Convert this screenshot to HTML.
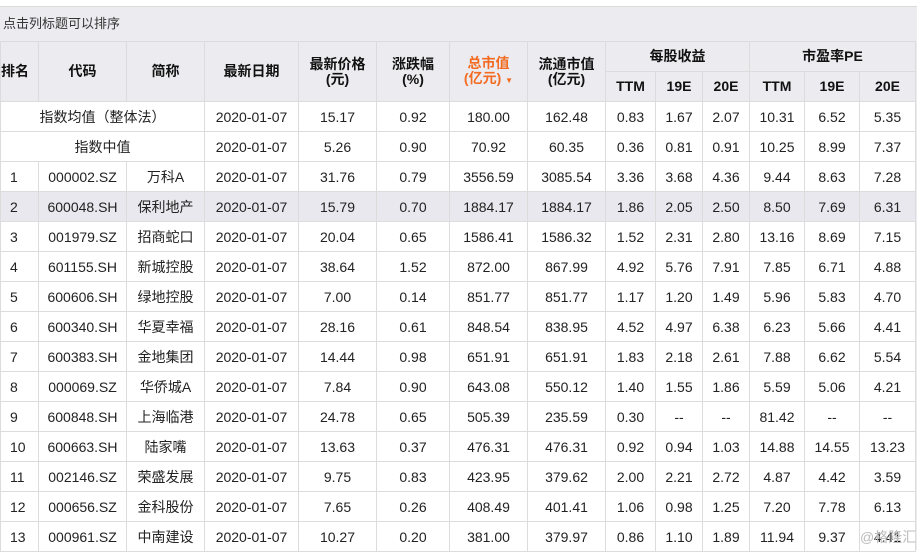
<!DOCTYPE html>
<html><head><meta charset="utf-8"><style>
body{margin:0;width:917px;height:550px;overflow:hidden;background:#fff;font-family:"Liberation Sans","Noto Sans CJK SC",sans-serif;}
.top{position:absolute;left:0;top:6px;width:917px;height:35px;background:#ecebf0;border-top:1px solid #dcdcdc;box-sizing:border-box;font-size:13px;color:#333;line-height:33px;padding-left:3px}
.right{position:absolute;left:915px;top:41px;width:2px;height:509px;background:#ecebf0}
table{position:absolute;left:0;top:41px;border-collapse:collapse;table-layout:fixed;font-size:14px;color:#222}
td,th{border:1px solid #dcdcdc;text-align:center;padding:0;white-space:nowrap;overflow:hidden}
th{background:#ecebf0;font-weight:bold;color:#111;font-size:14px;line-height:15px}
tr.h1 th{height:29px}
tr.h2 th{height:29px}
td{height:29px}
td.r{text-align:left;padding-left:9px}
tr.hl td{background:#e8e8ee}
.or{color:#f26b21}
.wm{position:absolute;left:860px;top:527px;font-size:14px;color:#bbb;white-space:nowrap}
</style></head><body>
<div class="top">点击列标题可以排序</div>
<div class="right"></div>
<table>
<colgroup><col style="width:38px"><col style="width:88px"><col style="width:78px"><col style="width:94px"><col style="width:78px"><col style="width:73px"><col style="width:78px"><col style="width:78px"><col style="width:50px"><col style="width:47px"><col style="width:47px"><col style="width:55px"><col style="width:55px"><col style="width:56px"></colgroup>
<tr class="h1"><th rowspan="2" style="text-align:left">排名</th><th rowspan="2">代码</th><th rowspan="2">简称</th><th rowspan="2">最新日期</th><th rowspan="2">最新价格<br>(元)</th><th rowspan="2">涨跌幅<br>(%)</th><th rowspan="2" class="or">总市值<br>(亿元) <span style="font-size:8px">▼</span></th><th rowspan="2">流通市值<br>(亿元)</th><th colspan="3">每股收益</th><th colspan="3">市盈率PE</th></tr>
<tr class="h2"><th>TTM</th><th>19E</th><th>20E</th><th>TTM</th><th>19E</th><th>20E</th></tr>
<tr><td colspan="3">指数均值（整体法）</td><td>2020-01-07</td><td>15.17</td><td>0.92</td><td>180.00</td><td>162.48</td><td>0.83</td><td>1.67</td><td>2.07</td><td>10.31</td><td>6.52</td><td>5.35</td></tr>
<tr><td colspan="3">指数中值</td><td>2020-01-07</td><td>5.26</td><td>0.90</td><td>70.92</td><td>60.35</td><td>0.36</td><td>0.81</td><td>0.91</td><td>10.25</td><td>8.99</td><td>7.37</td></tr>
<tr><td class="r">1</td><td>000002.SZ</td><td>万科A</td><td>2020-01-07</td><td>31.76</td><td>0.79</td><td>3556.59</td><td>3085.54</td><td>3.36</td><td>3.68</td><td>4.36</td><td>9.44</td><td>8.63</td><td>7.28</td></tr>
<tr class="hl"><td class="r">2</td><td>600048.SH</td><td>保利地产</td><td>2020-01-07</td><td>15.79</td><td>0.70</td><td>1884.17</td><td>1884.17</td><td>1.86</td><td>2.05</td><td>2.50</td><td>8.50</td><td>7.69</td><td>6.31</td></tr>
<tr><td class="r">3</td><td>001979.SZ</td><td>招商蛇口</td><td>2020-01-07</td><td>20.04</td><td>0.65</td><td>1586.41</td><td>1586.32</td><td>1.52</td><td>2.31</td><td>2.80</td><td>13.16</td><td>8.69</td><td>7.15</td></tr>
<tr><td class="r">4</td><td>601155.SH</td><td>新城控股</td><td>2020-01-07</td><td>38.64</td><td>1.52</td><td>872.00</td><td>867.99</td><td>4.92</td><td>5.76</td><td>7.91</td><td>7.85</td><td>6.71</td><td>4.88</td></tr>
<tr><td class="r">5</td><td>600606.SH</td><td>绿地控股</td><td>2020-01-07</td><td>7.00</td><td>0.14</td><td>851.77</td><td>851.77</td><td>1.17</td><td>1.20</td><td>1.49</td><td>5.96</td><td>5.83</td><td>4.70</td></tr>
<tr><td class="r">6</td><td>600340.SH</td><td>华夏幸福</td><td>2020-01-07</td><td>28.16</td><td>0.61</td><td>848.54</td><td>838.95</td><td>4.52</td><td>4.97</td><td>6.38</td><td>6.23</td><td>5.66</td><td>4.41</td></tr>
<tr><td class="r">7</td><td>600383.SH</td><td>金地集团</td><td>2020-01-07</td><td>14.44</td><td>0.98</td><td>651.91</td><td>651.91</td><td>1.83</td><td>2.18</td><td>2.61</td><td>7.88</td><td>6.62</td><td>5.54</td></tr>
<tr><td class="r">8</td><td>000069.SZ</td><td>华侨城A</td><td>2020-01-07</td><td>7.84</td><td>0.90</td><td>643.08</td><td>550.12</td><td>1.40</td><td>1.55</td><td>1.86</td><td>5.59</td><td>5.06</td><td>4.21</td></tr>
<tr><td class="r">9</td><td>600848.SH</td><td>上海临港</td><td>2020-01-07</td><td>24.78</td><td>0.65</td><td>505.39</td><td>235.59</td><td>0.30</td><td>--</td><td>--</td><td>81.42</td><td>--</td><td>--</td></tr>
<tr><td class="r">10</td><td>600663.SH</td><td>陆家嘴</td><td>2020-01-07</td><td>13.63</td><td>0.37</td><td>476.31</td><td>476.31</td><td>0.92</td><td>0.94</td><td>1.03</td><td>14.88</td><td>14.55</td><td>13.23</td></tr>
<tr><td class="r">11</td><td>002146.SZ</td><td>荣盛发展</td><td>2020-01-07</td><td>9.75</td><td>0.83</td><td>423.95</td><td>379.62</td><td>2.00</td><td>2.21</td><td>2.72</td><td>4.87</td><td>4.42</td><td>3.59</td></tr>
<tr><td class="r">12</td><td>000656.SZ</td><td>金科股份</td><td>2020-01-07</td><td>7.65</td><td>0.26</td><td>408.49</td><td>401.41</td><td>1.06</td><td>0.98</td><td>1.25</td><td>7.20</td><td>7.78</td><td>6.13</td></tr>
<tr><td class="r">13</td><td>000961.SZ</td><td>中南建设</td><td>2020-01-07</td><td>10.27</td><td>0.20</td><td>381.00</td><td>379.97</td><td>0.86</td><td>1.10</td><td>1.89</td><td>11.94</td><td>9.37</td><td>4.41</td></tr>
</table>
<div class="wm">@格隆汇</div>
</body></html>
